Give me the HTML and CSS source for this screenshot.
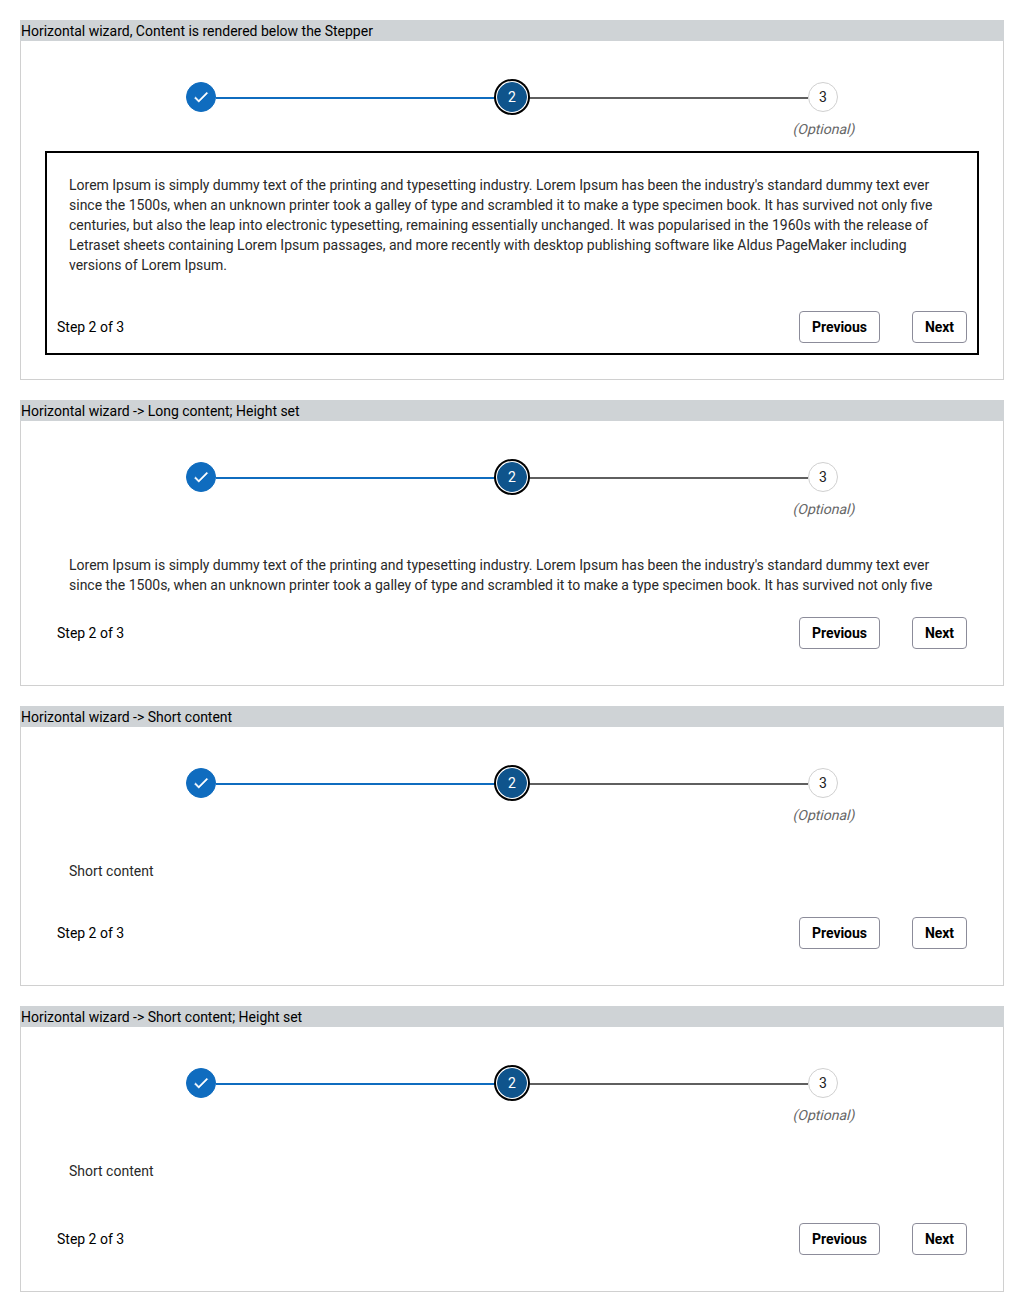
FILE: index.html
```html
<!DOCTYPE html>
<html lang="en">
<head>
<meta charset="utf-8">
<title>Horizontal wizard</title>
<link rel="stylesheet" href="styles.css">
</head>
<body>
<main class="examples">
  <section class="card">
    <h2 class="card-title">Horizontal wizard, Content is rendered below the Stepper</h2>
    <div class="wizard">
      <div class="track">
        <span class="step done"><svg class="check" viewBox="0 0 24 24"><path d="M9 16.17 4.83 12l-1.42 1.41L9 19 21 7l-1.41-1.41z"/></svg></span>
        <span class="line line-done"></span>
        <span class="step active">2</span>
        <span class="line"></span>
        <span class="step">3</span>
      </div>
      <div class="labels"><span></span><span></span><span class="optional">(Optional)</span></div>
      <div class="panel outlined">
        <div class="content"><p>Lorem Ipsum is simply dummy text of the printing and typesetting industry. Lorem Ipsum has been the industry's standard dummy text ever since the 1500s, when an unknown printer took a galley of type and scrambled it to make a type specimen book. It has survived not only five centuries, but also the leap into electronic typesetting, remaining essentially unchanged. It was popularised in the 1960s with the release of Letraset sheets containing Lorem Ipsum passages, and more recently with desktop publishing software like Aldus PageMaker including versions of Lorem Ipsum.</p></div>
        <div class="footer"><span class="count">Step 2 of 3</span><button class="btn" type="button">Previous</button><button class="btn" type="button">Next</button></div>
      </div>
    </div>
  </section>

  <section class="card">
    <h2 class="card-title">Horizontal wizard -&gt; Long content; Height set</h2>
    <div class="wizard">
      <div class="track">
        <span class="step done"><svg class="check" viewBox="0 0 24 24"><path d="M9 16.17 4.83 12l-1.42 1.41L9 19 21 7l-1.41-1.41z"/></svg></span>
        <span class="line line-done"></span>
        <span class="step active">2</span>
        <span class="line"></span>
        <span class="step">3</span>
      </div>
      <div class="labels"><span></span><span></span><span class="optional">(Optional)</span></div>
      <div class="panel">
        <div class="content fixed"><p>Lorem Ipsum is simply dummy text of the printing and typesetting industry. Lorem Ipsum has been the industry's standard dummy text ever since the 1500s, when an unknown printer took a galley of type and scrambled it to make a type specimen book. It has survived not only five</p></div>
        <div class="footer"><span class="count">Step 2 of 3</span><button class="btn" type="button">Previous</button><button class="btn" type="button">Next</button></div>
      </div>
    </div>
  </section>

  <section class="card">
    <h2 class="card-title">Horizontal wizard -&gt; Short content</h2>
    <div class="wizard">
      <div class="track">
        <span class="step done"><svg class="check" viewBox="0 0 24 24"><path d="M9 16.17 4.83 12l-1.42 1.41L9 19 21 7l-1.41-1.41z"/></svg></span>
        <span class="line line-done"></span>
        <span class="step active">2</span>
        <span class="line"></span>
        <span class="step">3</span>
      </div>
      <div class="labels"><span></span><span></span><span class="optional">(Optional)</span></div>
      <div class="panel">
        <div class="content"><p>Short content</p></div>
        <div class="footer"><span class="count">Step 2 of 3</span><button class="btn" type="button">Previous</button><button class="btn" type="button">Next</button></div>
      </div>
    </div>
  </section>

  <section class="card">
    <h2 class="card-title">Horizontal wizard -&gt; Short content; Height set</h2>
    <div class="wizard">
      <div class="track">
        <span class="step done"><svg class="check" viewBox="0 0 24 24"><path d="M9 16.17 4.83 12l-1.42 1.41L9 19 21 7l-1.41-1.41z"/></svg></span>
        <span class="line line-done"></span>
        <span class="step active">2</span>
        <span class="line"></span>
        <span class="step">3</span>
      </div>
      <div class="labels"><span></span><span></span><span class="optional">(Optional)</span></div>
      <div class="panel">
        <div class="content fixed"><p>Short content</p></div>
        <div class="footer"><span class="count">Step 2 of 3</span><button class="btn" type="button">Previous</button><button class="btn" type="button">Next</button></div>
      </div>
    </div>
  </section>
</main>
</body>
</html>
```
FILE: styles.css
```css
* {
  box-sizing: border-box;
}

body {
  margin: 0;
  background: #fff;
  color: #000;
  font: 14px/20px Roboto, sans-serif;
  word-spacing: -0.05px;
}

.examples {
  display: flex;
  flex-direction: column;
  gap: 20px;
  padding: 20px;
}

.card {
  border: 1px solid #d0d0d0;
  border-top-color: #cfd3d6;
}

.card-title {
  margin: 0 -1px;
  padding: 0 1px;
  background: #cfd3d6;
  font-size: 14px;
  font-weight: 400;
}

.wizard {
  padding: 41px 24px 24px;
}

.track {
  display: flex;
  align-items: center;
  padding: 0 141px;
}

.step {
  display: flex;
  align-items: center;
  justify-content: center;
  width: 30px;
  height: 30px;
  border: 1px solid #d0d0d0;
  border-radius: 50%;
  background: #fff;
  color: #222;
}

.done {
  border-color: #0f6cbf;
  background: #0f6cbf;
}

.active {
  z-index: 1;
  border-color: #0f548c;
  background: #0f548c;
  box-shadow: 0 0 0 1px #fff, 0 0 0 3px #000;
  color: #fff;
}

.check {
  width: 18px;
  height: 18px;
  margin-bottom: 1px;
  fill: #fff;
  stroke: #fff;
  stroke-width: 0.6;
}

.line {
  flex: 1;
  height: 2px;
  margin-top: 2px;
  background: #5f5f5f;
}

.line-done {
  background: #0f6cbf;
}

.labels {
  display: grid;
  grid-template-columns: repeat(3, 1fr);
  height: 39px;
  padding-top: 7px;
  text-align: center;
}

/* Slanted upright face, pivoting on the text baseline */
.optional {
  height: 20px;
  color: #666;
  transform: skewX(-14deg);
  transform-origin: 50% 14px;
}

.panel {
  border: 2px solid transparent;
}

.outlined {
  border-color: #000;
}

.content {
  padding: 22px 22px 36px;
  color: #292929;
}

.content p {
  margin: 0;
}

.fixed {
  height: 84px;
  padding-bottom: 0;
}

.footer {
  display: flex;
  align-items: center;
  gap: 32px;
  padding: 0 10px 10px;
}

.count {
  flex: 1;
}

.btn {
  height: 32px;
  padding: 0 12px;
  border: 1px solid #8c8c9a;
  border-radius: 4px;
  background: #fff;
  color: #000;
  font: 700 14px/20px Roboto, sans-serif;
  letter-spacing: -0.05px;
}
```
